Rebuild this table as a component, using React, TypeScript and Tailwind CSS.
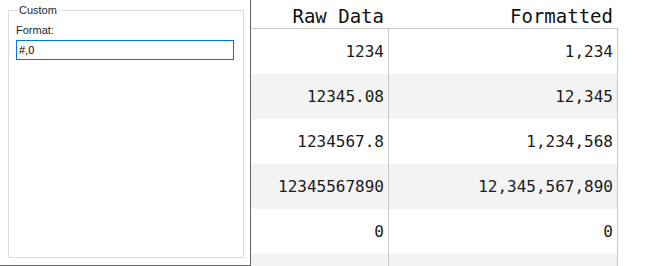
import React from 'react';

const rows: [string, string][] = [
  ['1234', '1,234'],
  ['12345.08', '12,345'],
  ['1234567.8', '1,234,568'],
  ['12345567890', '12,345,567,890'],
  ['0', '0'],
  ['', ''],
];

const mono = { fontFamily: '"DejaVu Sans Mono", monospace' };

function FormatPopup() {
  return (
    <div
      className="absolute left-0 top-0 w-[251px] h-[266px] bg-white border-r border-b border-[#646464]"
      style={{ fontFamily: '"Liberation Sans", Arial, sans-serif' }}
    >
      <fieldset className="ml-[8px] mt-[3px] w-[236px] h-[255px] border border-[#dcdcdc] pl-[7px] pr-0">
        <legend className="ml-[1px] px-[2px] text-[11px] leading-[14px] text-[#1e1e1e]">Custom</legend>
        <div className="mt-[6px] text-[11px] leading-[14px] text-[#1e1e1e]">Format:</div>
        <input
          className="mt-[3px] block w-[218px] h-[20px] border border-[#0078d7] pl-[2px] text-[11px] text-black outline-none"
          defaultValue="#,0"
        />
      </fieldset>
    </div>
  );
}

export default function App() {
  return (
    <div className="relative w-[648px] h-[266px] overflow-hidden bg-white">
      <div className="w-[618px]" style={mono}>
        <div className="h-[29px] border-b border-[#c8c8c8] grid grid-cols-[389px_229px] text-[19px] leading-[19px] text-[#111]">
          <div className="pt-[7px] pr-[5px] text-right">Raw Data</div>
          <div className="pt-[7px] pr-[5px] text-right">Formatted</div>
        </div>
        {rows.map(([raw, fmt], i) => (
          <div
            key={i}
            className={`grid grid-cols-[389px_229px] h-[45px] text-[16px] text-[#1a1a1a] ${i % 2 === 1 ? 'bg-[#f3f3f3]' : 'bg-white'}`}
          >
            <div className="flex items-center justify-end pr-[4px] border-r border-[#c8c8c8]">{raw}</div>
            <div className="flex items-center justify-end pr-[4px] border-r border-[#c8c8c8]">{fmt}</div>
          </div>
        ))}
      </div>
      <FormatPopup />
    </div>
  );
}
